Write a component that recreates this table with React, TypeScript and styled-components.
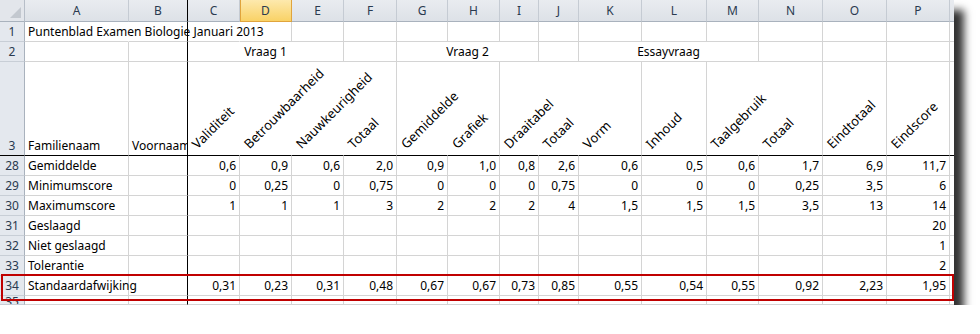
import styled, { createGlobalStyle, css } from "styled-components";

const GlobalStyle = createGlobalStyle`
  body {
    margin: 0;
    background: #ffffff;
    font-family: "Noto Sans", "Liberation Sans", sans-serif;
    font-size: 12px;
    color: #000000;
  }
`;

const GRID = "#d4d4d4";
const FREEZE = "#000000";

const letters = ["A", "B", "C", "D", "E", "F", "G", "H", "I", "J", "K", "L", "M", "N", "O", "P"];
const widths = [104, 59, 52, 52, 52, 53, 51, 52, 39, 40, 63, 65, 52, 64, 64, 63];

// rotated labels in row 3, columns C..P; line = is the right gridline visible
const rotated = [
  { t: "Validiteit", line: false },
  { t: "Betrouwbaarheid", line: false },
  { t: "Nauwkeurigheid", line: false },
  { t: "Totaal", line: true },
  { t: "Gemiddelde", line: false },
  { t: "Grafiek", line: true },
  { t: "Draaitabel", line: false },
  { t: "Totaal", line: false },
  { t: "Vorm", line: true },
  { t: "Inhoud", line: true },
  { t: "Taalgebruik", line: false },
  { t: "Totaal", line: true },
  { t: "Eindtotaal", line: true },
  { t: "Eindscore", line: true },
];

const e = "";
const rows = [
  { n: 28, label: "Gemiddelde", v: ["0,6", "0,9", "0,6", "2,0", "0,9", "1,0", "0,8", "2,6", "0,6", "0,5", "0,6", "1,7", "6,9", "11,7"] },
  { n: 29, label: "Minimumscore", v: ["0", "0,25", "0", "0,75", "0", "0", "0", "0,75", "0", "0", "0", "0,25", "3,5", "6"] },
  { n: 30, label: "Maximumscore", v: ["1", "1", "1", "3", "2", "2", "2", "4", "1,5", "1,5", "1,5", "3,5", "13", "14"] },
  { n: 31, label: "Geslaagd", v: [e, e, e, e, e, e, e, e, e, e, e, e, e, "20"] },
  { n: 32, label: "Niet geslaagd", v: [e, e, e, e, e, e, e, e, e, e, e, e, e, "1"] },
  { n: 33, label: "Tolerantie", v: [e, e, e, e, e, e, e, e, e, e, e, e, e, "2"] },
  { n: 34, label: "Standaardafwijking", v: ["0,31", "0,23", "0,31", "0,48", "0,67", "0,67", "0,73", "0,85", "0,55", "0,54", "0,55", "0,92", "2,23", "1,95"] },
];

const Page = styled.div`
  padding: 0;
`;

const Sheet = styled.div`
  position: relative;
  display: grid;
  grid-template-columns: 25px ${widths.map((w) => `${w}px`).join(" ")} 4px;
  grid-template-rows: 22px 20px 20px 94px repeat(7, 20px) 9px;
  width: 954px;
  height: 305px;
  overflow: hidden;
  background: #ffffff;
  box-shadow: 10px 10px 8px rgba(0, 0, 0, 0.8);
`;

const Corner = styled.div`
  position: relative;
  box-sizing: border-box;
  background: #e3e6eb;
  border-right: 1px solid #b7bec8;
  border-bottom: 1px solid #a9b2bd;

  &::after {
    content: "";
    position: absolute;
    right: 3px;
    bottom: 3px;
    width: 11px;
    height: 11px;
    background: #c3c8cf;
    clip-path: polygon(100% 0, 100% 100%, 0 100%);
  }
`;

const ColHeader = styled.div<{ $active?: boolean; $freeze?: boolean }>`
  box-sizing: border-box;
  display: flex;
  align-items: center;
  justify-content: center;
  color: #2a3a4f;
  background: linear-gradient(#e9ecf0, #dde1e7);
  border-right: 1px solid ${(p) => (p.$freeze ? FREEZE : "#c5cbd3")};
  border-bottom: 1px solid #a9b2bd;
  ${(p) =>
    p.$active &&
    css`
      background: linear-gradient(#fde9ad, #f9d266);
      border-right-color: #e0a43c;
      box-shadow: inset 1px 0 0 #e0a43c;
      border-bottom-color: #e0a43c;
    `}
`;

const RowHeader = styled.div<{ $bottom?: string; $cut?: boolean }>`
  box-sizing: border-box;
  display: flex;
  align-items: ${(p) => (p.$cut ? "flex-start" : "flex-end")};
  justify-content: center;
  padding-bottom: 1px;
  line-height: ${(p) => (p.$cut ? "12px" : "16px")};
  overflow: hidden;
  color: #2a3a4f;
  background: #e4e8ee;
  border-right: 1px solid #a9b2bd;
  border-bottom: 1px solid ${(p) => p.$bottom ?? "#c8ced6"};
`;

const Cell = styled.div<{
  $align?: "left" | "right" | "center";
  $right?: string;
  $bottom?: string;
  $clip?: boolean;
  $span?: number;
}>`
  box-sizing: border-box;
  display: flex;
  align-items: flex-end;
  justify-content: ${(p) =>
    p.$align === "right" ? "flex-end" : p.$align === "center" ? "center" : "flex-start"};
  padding: 0 3px 1px 3px;
  line-height: 16px;
  white-space: nowrap;
  overflow: ${(p) => (p.$clip ? "hidden" : "visible")};
  border-right: 1px solid ${(p) => p.$right ?? GRID};
  border-bottom: 1px solid ${(p) => p.$bottom ?? GRID};
  ${(p) => p.$span && `grid-column: span ${p.$span};`}
`;

const Filler = styled.div<{ $head?: boolean; $bottom?: string }>`
  box-sizing: border-box;
  background: ${(p) => (p.$head ? "linear-gradient(#e9ecf0, #dde1e7)" : "#ffffff")};
  border-bottom: 1px solid ${(p) => p.$bottom ?? (p.$head ? "#a9b2bd" : GRID)};
`;

const RotCell = styled(Cell)`
  padding: 0 0 4px 11px;
`;

const Rotated = styled.span`
  display: inline-block;
  font-size: 13px;
  line-height: 14px;
  transform: rotate(-45deg);
  transform-origin: 0 100%;
`;

const Highlight = styled.div`
  position: absolute;
  left: 1px;
  top: 274px;
  width: 953px;
  height: 27px;
  box-sizing: border-box;
  border: 2px solid #c00000;
  pointer-events: none;
`;

function lineAfter(i: number, hidden: number[]) {
  if (i === 1) return FREEZE;
  return hidden.includes(i) ? "transparent" : GRID;
}

export default function App() {
  return (
    <Page>
      <GlobalStyle />
      <Sheet>
        <Corner />
        {letters.map((l, i) => (
          <ColHeader key={l} $active={l === "D"} $freeze={i === 1}>
            {l}
          </ColHeader>
        ))}
        <Filler $head />

        {/* row 1 */}
        <RowHeader>1</RowHeader>
        <Cell $right={lineAfter(0, [0, 2])}>Puntenblad Examen Biologie Januari 2013</Cell>
        {widths.slice(1).map((_, j) => (
          <Cell key={j} $right={lineAfter(j + 1, [0, 2])} />
        ))}
        <Filler />

        {/* row 2 */}
        <RowHeader>2</RowHeader>
        <Cell />
        <Cell $right={FREEZE} />
        <Cell $span={3} $align="center">Vraag 1</Cell>
        <Cell />
        <Cell $span={3} $align="center">Vraag 2</Cell>
        <Cell />
        <Cell $span={3} $align="center">Essayvraag</Cell>
        <Cell />
        <Cell />
        <Cell />
        <Filler />

        {/* row 3 */}
        <RowHeader $bottom={FREEZE}>3</RowHeader>
        <Cell $bottom={FREEZE}>Familienaam</Cell>
        <Cell $bottom={FREEZE} $right={FREEZE} $clip>
          Voornaam
        </Cell>
        {rotated.map((r, j) => (
          <RotCell key={j} $bottom={FREEZE} $right={r.line ? GRID : "transparent"}>
            <Rotated>{r.t}</Rotated>
          </RotCell>
        ))}
        <Filler $bottom={FREEZE} />

        {rows.map((r) => (
          <Row key={r.n} n={r.n} label={r.label} values={r.v} />
        ))}

        {/* row 35, cut off by the bottom edge */}
        <RowHeader $cut>35</RowHeader>
        {widths.map((_, j) => (
          <Cell key={j} $right={j === 1 ? FREEZE : GRID} />
        ))}
        <Filler />

        <Highlight />
      </Sheet>
    </Page>
  );
}

function Row({ n, label, values }: { n: number; label: string; values: string[] }) {
  return (
    <>
      <RowHeader>{n}</RowHeader>
      <Cell>{label}</Cell>
      <Cell $right={FREEZE} />
      {values.map((v, j) => (
        <Cell key={j} $align="right">
          {v}
        </Cell>
      ))}
      <Filler />
    </>
  );
}
